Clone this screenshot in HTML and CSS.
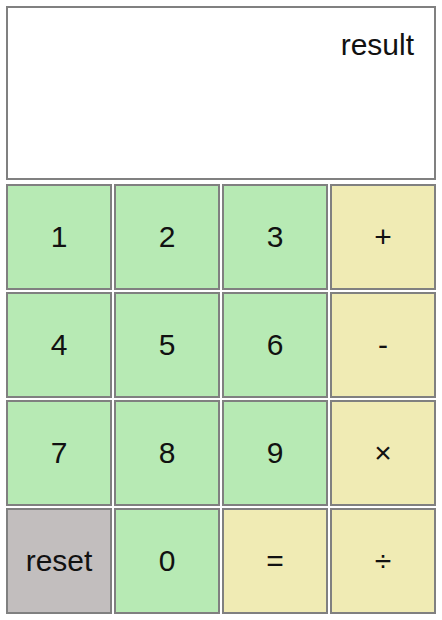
FILE: index.html
```html
<!DOCTYPE html>
<html>
<head>
<meta charset="utf-8">
<link rel="stylesheet" href="styles.css">
</head>
<body>
<div class="calc">
  <div class="display">result</div>
  <div class="keys">
    <button class="key num">1</button>
    <button class="key num">2</button>
    <button class="key num">3</button>
    <button class="key op">+</button>
    <button class="key num">4</button>
    <button class="key num">5</button>
    <button class="key num">6</button>
    <button class="key op">-</button>
    <button class="key num">7</button>
    <button class="key num">8</button>
    <button class="key num">9</button>
    <button class="key op">×</button>
    <button class="key reset">reset</button>
    <button class="key num">0</button>
    <button class="key op">=</button>
    <button class="key op">÷</button>
  </div>
</div>
</body>
</html>
```
FILE: styles.css
```css
html, body {
  margin: 0;
  padding: 0;
  background: #ffffff;
}
.calc {
  padding: 6px;
  width: 430px;
  font-family: "Liberation Sans", Arial, sans-serif;
  color: #111;
}
.display {
  box-sizing: border-box;
  height: 174px;
  border: 2px solid #808080;
  text-align: right;
  padding: 20px 20px 0 0;
  font-size: 30px;
  line-height: 34px;
}
.keys {
  margin-top: 4px;
  display: grid;
  grid-template-columns: repeat(4, 106px);
  grid-auto-rows: 106px;
  gap: 2px;
}
.key {
  box-sizing: border-box;
  margin: 0;
  padding: 0;
  border: 2px solid #808080;
  font-family: "Liberation Sans", Arial, sans-serif;
  font-size: 30px;
  color: #111;
  display: flex;
  align-items: center;
  justify-content: center;
}
.num { background: #b7eab4; }
.op { background: #f0ebb4; }
.reset { background: #c2bebe; }
```
